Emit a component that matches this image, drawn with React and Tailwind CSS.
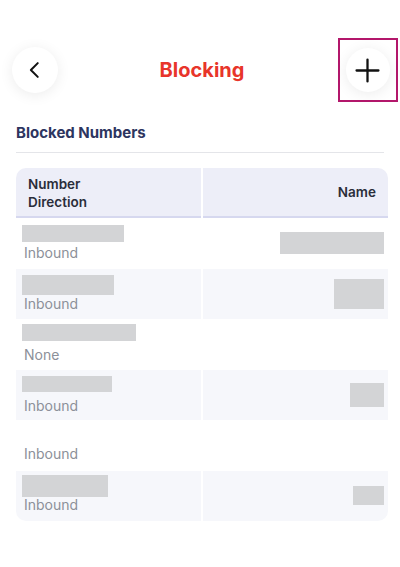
const rows = [
  { num: 102, numH: 17, numMt: 7, textMt: 1, dir: "Inbound", name: { w: 104, h: 22 } },
  { num: 92, numH: 20, numMt: 6, textMt: -1, dir: "Inbound", name: { w: 50, h: 30 } },
  { num: 114, numH: 17, numMt: 5, textMt: 4, dir: "None", name: null },
  { num: 90, numH: 16, numMt: 6, textMt: 4, dir: "Inbound", name: { w: 34, h: 24 } },
  { num: 0, numH: 17, numMt: 6, textMt: 1, dir: "Inbound", name: null },
  { num: 86, numH: 22, numMt: 4, textMt: -2, dir: "Inbound", name: { w: 31, h: 19 } },
];

function Row({ row, index, last }) {
  const shaded = index % 2 === 1;
  const bg = shaded ? "bg-[#f6f7fb]" : "bg-white";
  return (
    <div className="grid grid-cols-2 gap-x-[2px] h-[50.5px]">
      <div className={`${bg} pl-[6px] ${last ? "rounded-bl-[10px]" : ""}`}>
        {row.num > 0 ? (
          <div
            className="bg-[#d3d4d6]"
            style={{ width: row.num, height: row.numH, marginTop: row.numMt }}
          />
        ) : (
          <div style={{ height: row.numH, marginTop: row.numMt }} />
        )}
        <div
          className="text-[14px] leading-[20px] text-[#8c9099] pl-[2px]"
          style={{ marginTop: row.textMt }}
        >
          {row.dir}
        </div>
      </div>
      <div className={`${bg} flex items-center justify-end pr-[4px] ${last ? "rounded-br-[10px]" : ""}`}>
        {row.name && (
          <div
            className="bg-[#d3d4d6]"
            style={{ width: row.name.w, height: row.name.h }}
          />
        )}
      </div>
    </div>
  );
}

export default function App() {
  return (
    <div className="w-[400px] h-[567px] bg-white font-['Inter',sans-serif] overflow-hidden">
      {/* Header */}
      <div className="flex items-center justify-between h-[64px] mt-[38px] pl-[12px] pr-[2px]">
        <button className="w-[46px] h-[46px] rounded-full bg-white shadow-[0_2px_14px_rgba(0,0,0,0.08)] flex items-center justify-center">
          <svg width="22" height="22" viewBox="0 0 24 24" fill="none" stroke="#111" strokeWidth="2.2" strokeLinecap="round" strokeLinejoin="round">
            <path d="M15 4.5l-7.5 7.5 7.5 7.5" />
          </svg>
        </button>
        <h1 className="text-[20px] font-bold text-[#e8352a] ml-[8px]">Blocking</h1>
        <div className="w-[60px] h-[64px] border-2 border-[#b3176b] flex items-center justify-center">
          <div className="w-[44px] h-[44px] rounded-full bg-white shadow-[0_2px_14px_rgba(0,0,0,0.08)] flex items-center justify-center">
            <svg width="25" height="25" viewBox="0 0 24 24" fill="none" stroke="#111" strokeWidth="2.2" strokeLinecap="round">
              <path d="M12 1.5v21M1.5 12h21" />
            </svg>
          </div>
        </div>
      </div>

      {/* Section title */}
      <div className="px-[16px] mt-[21px]">
        <h2 className="text-[15px] font-bold text-[#2d355f] leading-[20px]">Blocked Numbers</h2>
        <div className="h-px bg-[#e4e5e9] mt-[9px]" />
      </div>

      {/* Table */}
      <div className="mx-[16px] w-[372px] mt-[15px]">
        <div className="grid grid-cols-2 gap-x-[2px]">
          <div className="bg-[#edeef8] rounded-tl-[10px] border-b-2 border-[#d6d8ef] h-[50px] pl-[12px] pt-[7px] text-[13.5px] font-semibold text-[#2a2d3a] leading-[18px]">
            <div>Number</div>
            <div>Direction</div>
          </div>
          <div className="bg-[#edeef8] rounded-tr-[10px] border-b-2 border-[#d6d8ef] h-[50px] pr-[12px] flex items-center justify-end text-[13.5px] font-semibold text-[#2a2d3a]">
            Name
          </div>
        </div>
        {rows.map((row, i) => (
          <Row key={i} row={row} index={i} last={i === rows.length - 1} />
        ))}
      </div>
    </div>
  );
}
